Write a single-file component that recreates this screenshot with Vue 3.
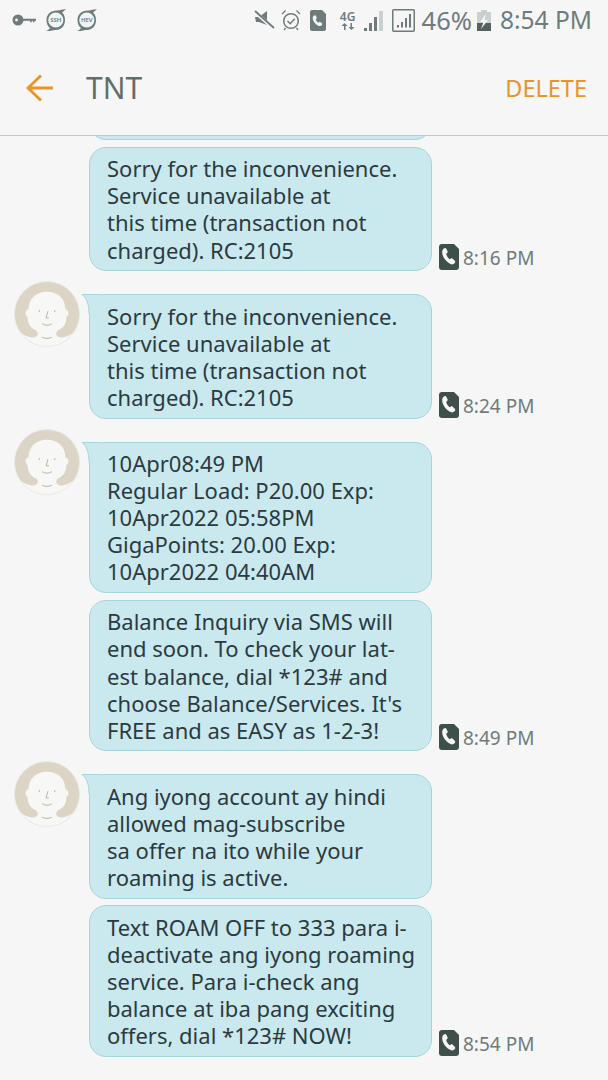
<template>
  <div class="screen">
    <div class="status-bar">
      <div class="status-left">
        <svg class="ic-key" width="24" height="14" viewBox="0 0 24 14">
          <circle cx="6" cy="7" r="5.500" fill="#6f7b7b" />
          <circle cx="4.500" cy="7" r="1.400" fill="#f6f6f6" />
          <path d="M10 5.800h14v2h-1.500v1.400h-1.600V7.800h-1.200v1.400h-1.600V7.800H10z" fill="#6f7b7b" />
        </svg>
        <svg v-for="t in ['SSH', 'HEV']" :key="t" class="ic-swirl" width="22" height="24" viewBox="0 0 22 24">
          <path d="M21 1 C17 1.500 15 2 13 2.500 C6 2 1.500 6 1.500 12 C1.500 16 3 18.500 5 20 C4 21.500 2.500 22.500 1 23 C5 23 8 22.500 10 22 C16 22.500 20 18 20 12 C20 8 18.500 5.500 17 4.500 C18.500 3.500 20 2 21 1Z" fill="#6f7b7b" />
          <circle cx="10.800" cy="12" r="7.600" fill="#eef3f3" />
          <text x="10.800" y="14.300" text-anchor="middle" class="swirl-text">{{ t }}</text>
        </svg>
      </div>
      <div class="status-right">
        <svg class="ic-mute" width="21" height="20" viewBox="0 0 21 20">
          <path d="M1 7h4l8-6v14l-8-3H2z" fill="#6f7b7b" />
          <path d="M1 2l18 16" stroke="#f6f6f6" stroke-width="3.500" />
          <path d="M1 1l19 17" stroke="#6f7b7b" stroke-width="1.800" />
        </svg>
        <svg class="ic-alarm" width="20" height="22" viewBox="0 0 20 22">
          <circle cx="10" cy="12" r="7.300" fill="none" stroke="#6f7b7b" stroke-width="1.500" />
          <path d="M6.500 12l2.700 2.700 4.500-5" fill="none" stroke="#6f7b7b" stroke-width="1.500" />
          <path d="M1 5l3.500-3.500M19 5l-3.500-3.500M4.500 19l-1.500 2M15.500 19l1.500 2" stroke="#6f7b7b" stroke-width="1.300" fill="none" />
        </svg>
        <svg class="ic-sim" width="16" height="21" viewBox="0 0 16 21">
          <path d="M2 0h10l4 4v15a2 2 0 0 1-2 2H2a2 2 0 0 1-2-2V2a2 2 0 0 1 2-2z" fill="#6f7b7b" />
          <path transform="translate(-1.500 0) scale(1.150)" d="M4.500 5c1-.8 1.600-.6 2 .2l.8 1.800-1 1.200c.4 1.200 1.200 2.200 2.300 2.800l1.200-.8 1.700 1.200c.6.500.6 1.200 0 1.900-.8.800-2 .9-3.300.2C5.500 12 3.800 9.500 3.700 7c0-.9.300-1.500.8-2z" fill="#f6f6f6" />
        </svg>
        <div class="net">
          <span class="net-label">4G</span>
          <svg width="16" height="7" viewBox="0 0 16 7">
            <path d="M4 7V3H1.500L4.500 0l3 3H5.500v4zM12 0v4h2.500l-3 3-3-3h2V0z" fill="#6f7b7b" />
          </svg>
        </div>
        <svg class="ic-bars" width="20" height="21" viewBox="0 0 20 21">
          <rect x="0" y="18" width="3" height="3" fill="#6f7b7b" />
          <rect x="5" y="13" width="3" height="8" fill="#6f7b7b" />
          <rect x="10" y="7" width="3" height="14" fill="#6f7b7b" />
          <rect x="15" y="1" width="4" height="20" fill="#c9d0d0" />
        </svg>
        <svg class="ic-box" width="23" height="23" viewBox="0 0 23 23">
          <rect x="0.750" y="0.750" width="21.500" height="21.500" rx="1" fill="none" stroke="#6f7b7b" stroke-width="1.500" />
          <rect x="5" y="16" width="2" height="2.500" fill="#6f7b7b" />
          <rect x="9" y="13" width="2" height="5.500" fill="#6f7b7b" />
          <rect x="13" y="9" width="2" height="9.500" fill="#6f7b7b" />
          <rect x="17" y="5" width="2" height="13.500" fill="#6f7b7b" />
        </svg>
        <span class="battery-pct">46%</span>
        <svg class="ic-batt" width="14" height="21" viewBox="0 0 14 21">
          <path d="M4 0h6v2h4v19H0V2h4z" fill="#c9d0d0" />
          <path d="M0 13h14v8H0z" fill="#56615f" />
          <path d="M9 4L3 12h3.500L4 19l7-9H7.500z" fill="#f6f6f6" />
        </svg>
        <span class="clock">8:54 PM</span>
      </div>
    </div>

    <div class="toolbar">
      <svg class="back" width="28" height="28" viewBox="0 0 28 28">
        <path d="M27 14H2M15 1.500 2 14l13 12.500" fill="none" stroke="#e8942c" stroke-width="2.800" />
      </svg>
      <span class="title">TNT</span>
      <span class="delete">DELETE</span>
    </div>

    <div class="messages">
      <div v-for="(group, g) in groups" :key="g" class="group">
        <div class="avatar-col">
          <svg v-if="group.avatar" class="avatar" width="66" height="66" viewBox="0 0 68 68">
            <circle cx="34" cy="34" r="33.500" fill="#f7f7f5" stroke="#e8e8e4" />
            <path d="M34 1a33 33 0 0 0-27 52c3 3 10 6 14 5 3-1 5-3 2-7-7-3-9-8-9-14-3-2-3-7 1-8 0-11 8-18 19-18s19 7 19 18c4 1 4 6 1 8 0 6-2 11-9 14-3 4-1 6 2 7 4 1 11-2 14-5A33 33 0 0 0 34 1z" fill="#dcd5c6" />
            <path d="M26 30v2M42 30v2M35 31l-2 7h3M29 44c3 2 7 2 10 0M29 58c3 1.500 7 1.500 10 0" fill="none" stroke="#b8b3a8" stroke-width="1" />
          </svg>
        </div>
        <div class="bubbles">
          <div v-for="(m, i) in group.messages" :key="i" class="row">
            <div class="bubble" :class="{ cut: m.cut }">
              <svg v-if="group.avatar && i === 0" class="tail" width="20" height="20" viewBox="0 0 20 20">
                <path d="M0 .5H20V20H7C7 11 5 4 0 .5Z" fill="#c9e9ef" />
                <path d="M20 .5H0C5 4 7 11 7 20" fill="none" stroke="#a8d5da" />
              </svg>
              <div v-for="line in m.lines" :key="line" class="line">{{ line }}</div>
            </div>
            <div v-if="m.time" class="stamp">
              <svg width="20" height="26" viewBox="0 0 20 26">
                <path d="M3 0h12l5 5v18a3 3 0 0 1-3 3H3a3 3 0 0 1-3-3V3a3 3 0 0 1 3-3z" fill="#3f4f4b" />
                <path transform="translate(-2 0) scale(1.180)" d="M5.500 4c1.200-1 2-.8 2.500.2l1.200 2.600-1.400 1.600c.4 1.800 1.600 3.500 3 4.500l1.800-1 2.300 2c.8.700.7 1.700 0 2.500-1 1.100-2.700 1.200-4.300.2C7 14.300 4.500 10.700 4.400 7c0-1.300.4-2.300 1.100-3z" fill="#f6f6f6" />
              </svg>
              <span>{{ m.time }}</span>
            </div>
          </div>
        </div>
      </div>
    </div>
  </div>
</template>

<script setup>
const sorry = [
  'Sorry for the inconvenience.',
  'Service unavailable at',
  'this time (transaction not',
  'charged). RC:2105',
]

const groups = [
  {
    avatar: false,
    messages: [
      { cut: true, lines: [''] },
      { lines: sorry, time: '8:16 PM' },
    ],
  },
  {
    avatar: true,
    messages: [{ lines: sorry, time: '8:24 PM' }],
  },
  {
    avatar: true,
    messages: [
      {
        lines: [
          '10Apr08:49 PM',
          'Regular Load: P20.00 Exp:',
          '10Apr2022 05:58PM',
          'GigaPoints: 20.00 Exp:',
          '10Apr2022 04:40AM',
        ],
      },
      {
        lines: [
          'Balance Inquiry via SMS will',
          'end soon. To check your lat-',
          'est balance, dial *123# and',
          "choose Balance/Services. It's",
          'FREE and as EASY as 1-2-3!',
        ],
        time: '8:49 PM',
      },
    ],
  },
  {
    avatar: true,
    messages: [
      {
        lines: [
          'Ang iyong account ay hindi',
          'allowed mag-subscribe',
          'sa offer na ito while your',
          'roaming is active.',
        ],
      },
      {
        lines: [
          'Text ROAM OFF to 333 para i-',
          'deactivate ang iyong roaming',
          'service. Para i-check ang',
          'balance at iba pang exciting',
          'offers, dial *123# NOW!',
        ],
        time: '8:54 PM',
      },
    ],
  },
]
</script>

<style>
html,
body {
  background: #f6f6f6;
}
</style>

<style scoped>
.screen {
  width: 608px;
  height: 1080px;
  display: flex;
  flex-direction: column;
  overflow: hidden;
  background: #f6f6f6;
  font-family: "Noto Sans", "Open Sans", sans-serif;
}

.status-bar {
  height: 40px;
  flex: none;
  display: flex;
  align-items: center;
  justify-content: space-between;
  padding: 0 16px 0 12px;
  color: #6f7b7b;
  box-sizing: border-box;
}

.status-left,
.status-right {
  display: flex;
  align-items: center;
}

.status-left {
  gap: 9px;
}

.swirl-text {
  font-size: 6px;
  fill: #6f7b7b;
  font-family: "Noto Sans", sans-serif;
  font-weight: 600;
}

.ic-mute {
  margin-right: 6px;
}

.ic-alarm {
  margin-right: 9px;
}

.ic-sim {
  margin-right: 14px;
}

.net {
  width: 16px;
  display: flex;
  flex-direction: column;
  align-items: center;
  margin-right: 8px;
}

.net-label {
  font-size: 12px;
  line-height: 12px;
  font-weight: 600;
}

.ic-bars {
  margin-right: 8px;
}

.ic-box {
  margin-right: 7px;
}

.battery-pct {
  font-size: 25.500px;
  line-height: 30px;
  margin-right: 5px;
}

.ic-batt {
  margin-right: 9px;
}

.clock {
  font-size: 24.500px;
  line-height: 30px;
}

.toolbar {
  height: 96px;
  flex: none;
  display: flex;
  align-items: center;
  padding: 0 21px 0 26px;
  box-sizing: border-box;
  border-bottom: 1px solid #c4c7c7;
}

.title {
  margin-left: 32px;
  font-size: 30px;
  color: #636d6c;
}

.delete {
  margin-left: auto;
  font-size: 23.500px;
  color: #e8942c;
}

.messages {
  flex: 1;
  min-height: 0;
  overflow: hidden;
  display: flex;
  flex-direction: column;
  gap: 23px;
}

.group {
  display: flex;
  padding-left: 14px;
}

.avatar-col {
  width: 75px;
  flex: none;
}

.avatar {
  display: block;
  margin-top: -13px;
}

.bubbles {
  display: flex;
  flex-direction: column;
  gap: 6.800px;
}

.row {
  display: flex;
  align-items: flex-end;
}

.bubble {
  position: relative;
  width: 343px;
  box-sizing: border-box;
  padding: 7.500px 12px 6.500px 17px;
  background: #c9e9ef;
  border: 1px solid #a8d5da;
  border-radius: 17px;
  color: #2c3a3f;
  font-size: 22px;
  line-height: 27.100px;
}

.bubble.cut {
  height: 120px;
  margin-top: -116px;
}

.tail {
  position: absolute;
  left: -8px;
  top: -1px;
}

.line {
  white-space: pre;
  position: relative;
}

.stamp {
  display: flex;
  align-items: flex-end;
  gap: 4px;
  margin-left: 7px;
  color: #6f7b7b;
  font-size: 19px;
  line-height: 26px;
}

.stamp svg {
  margin-bottom: 1px;
}
</style>
